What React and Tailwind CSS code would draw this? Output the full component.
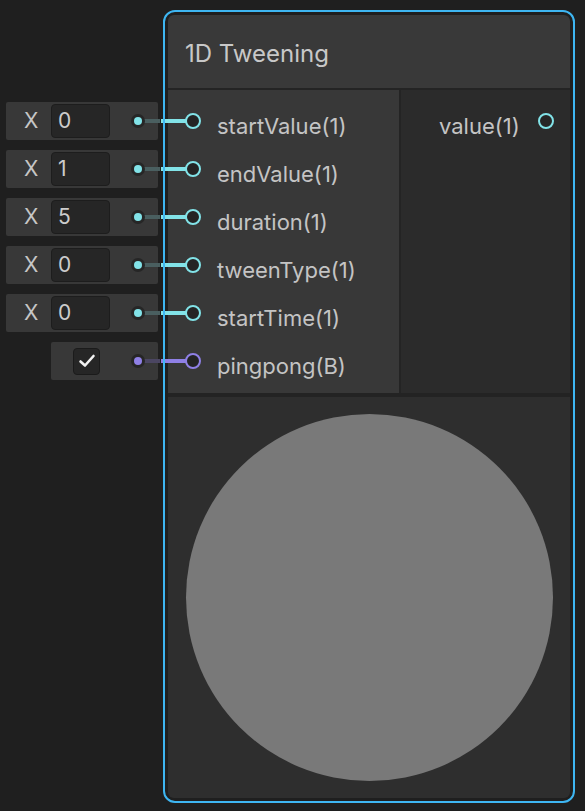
import React from 'react';

const inputs = [
    { name: 'startValue(1)', value: '0', kind: 'num' },
    { name: 'endValue(1)', value: '1', kind: 'num' },
    { name: 'duration(1)', value: '5', kind: 'num' },
    { name: 'tweenType(1)', value: '0', kind: 'num' },
    { name: 'startTime(1)', value: '0', kind: 'num' },
    { name: 'pingpong(B)', value: true, kind: 'bool' },
];

const FieldRow = ({ item }) => {
    const isBool = item.kind === 'bool';
    return (
        <div
            className={`relative h-[38px] rounded-[2px] bg-[#383838] flex items-center ${isBool ? 'ml-[45px] w-[107px]' : 'w-[152px]'}`}
        >
            {isBool ? (
                <div className="ml-[22px] w-[27px] h-[27px] rounded-[4px] bg-[#262626] border border-[#1b1b1b] flex items-center justify-center">
                    <svg width="20" height="20" viewBox="0 0 20 20">
                        <path d="M3.5 10.5 L8 14.5 L16.5 5" fill="none" stroke="#f2f2f2" strokeWidth="2.6" strokeLinecap="round" strokeLinejoin="round" />
                    </svg>
                </div>
            ) : (
                <>
                    <span className="w-[45px] pl-[18px] text-[21px] text-[#c6c6c6]">X</span>
                    <div className="w-[59px] h-[34px] rounded-[4px] bg-[#262626] border border-[#1d1d1d] flex items-center pl-[6px] text-[21px] text-[#cccccc]">
                        {item.value}
                    </div>
                </>
            )}
            {/* dim wire stub */}
            <div className={`absolute top-[17px] h-[4px] w-[22px] ${isBool ? 'left-[87px] bg-[#4b4662]' : 'left-[132px] bg-[#4a5f60]'}`} />
            <div className={`absolute top-[12px] w-[14px] h-[14px] rounded-full bg-[#262626] flex items-center justify-center ${isBool ? 'left-[80px]' : 'left-[125px]'}`}>
                <div className={`w-[8px] h-[8px] rounded-full ${isBool ? 'bg-[#8f80e6]' : 'bg-[#82e3e8]'}`} />
            </div>
        </div>
    );
};

const InputPort = ({ item }) => {
    const isBool = item.kind === 'bool';
    return (
        <div className="relative h-[48px] flex items-center">
            <div className={`absolute left-[-7px] top-[22px] h-[4px] w-[26px] ${isBool ? 'bg-[#8f80e6]' : 'bg-[#82e3e8]'}`} />
            <div className={`relative ml-[17px] w-[16px] h-[16px] rounded-full bg-[#242424] border-2 ${isBool ? 'border-[#8f80e6]' : 'border-[#82e3e8]'}`} />
            <span className="relative top-[5px] ml-[16px] text-[22px] text-[#c4c4c4]">{item.name}</span>
        </div>
    );
};

export default function App() {
    return (
        <div className="w-[585px] h-[811px] bg-[#1f1f1f] flex font-['Inter','Noto_Sans',sans-serif] overflow-hidden">
            {/* Left field column */}
            <div className="w-[163px] shrink-0 flex flex-col gap-[10px] pt-[102px] pl-[6px]">
                {inputs.map((item) => (
                    <FieldRow key={item.name} item={item} />
                ))}
            </div>

            {/* Node */}
            <div className="relative mt-[10px] w-[412px] h-[793px] p-[5px] shrink-0">
                <div className="h-full rounded-[6px] flex flex-col bg-[#232323]">
                    {/* Header */}
                    <div className="h-[73px] shrink-0 rounded-t-[6px] bg-[#393939] flex items-center pl-[17px] text-[24px] text-[#c8c8c8]">
                        <span className="relative top-[2px]">1D Tweening</span>
                    </div>
                    <div className="h-[2px] shrink-0 bg-[#242424]" />

                    {/* Ports */}
                    <div className="flex shrink-0">
                        <div className="w-[231px] bg-[#383838] pt-[7px] pb-[8px]">
                            {inputs.map((item) => (
                                <InputPort key={item.name} item={item} />
                            ))}
                        </div>
                        <div className="w-[2px] bg-[#242424]" />
                        <div className="flex-1 bg-[#2b2b2b] pt-[7px]">
                            <div className="h-[48px] flex items-center">
                                <span className="relative top-[5px] ml-[38px] text-[22px] text-[#c4c4c4]">value(1)</span>
                                <div className="ml-[18px] w-[16px] h-[16px] rounded-full bg-[#262626] border-2 border-[#82e3e8]" />
                            </div>
                        </div>
                    </div>
                    <div className="h-[4px] shrink-0 bg-[#232323]" />

                    {/* Preview */}
                    <div className="flex-1 rounded-b-[6px] bg-[#2e2e2e] flex items-center justify-center">
                        <div className="w-[367px] h-[367px] rounded-full bg-[#797979]" />
                    </div>
                </div>
                {/* selection outline drawn over the wires */}
                <div className="absolute inset-0 rounded-[12px] border-2 border-[#3eb6f2] pointer-events-none" />
            </div>
        </div>
    );
}
